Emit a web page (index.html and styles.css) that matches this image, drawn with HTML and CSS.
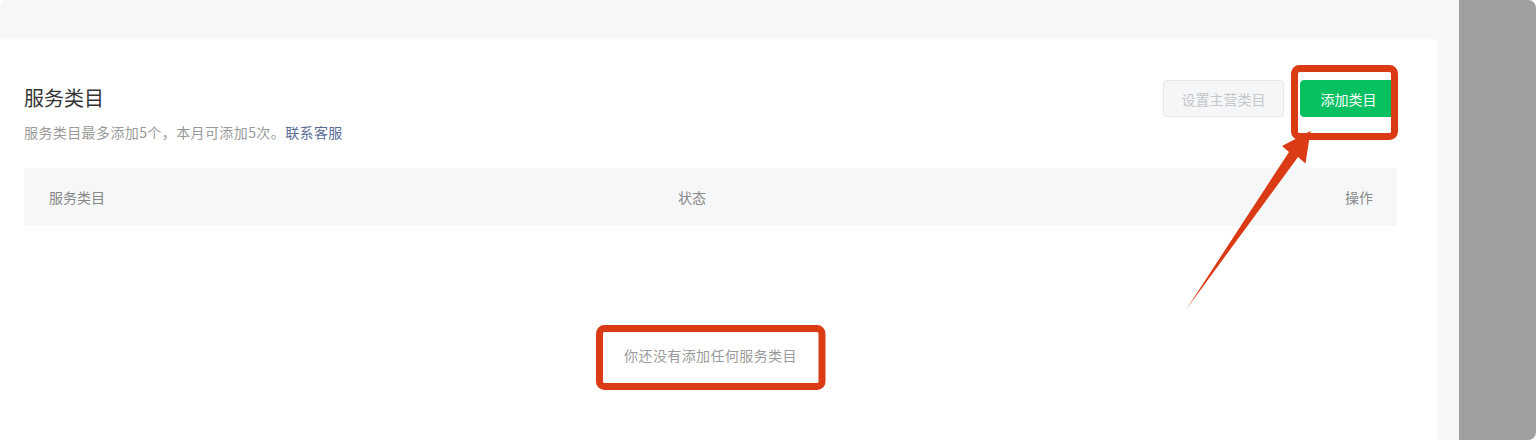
FILE: index.html
```html
<!DOCTYPE html>
<html lang="zh-CN">
<head>
<meta charset="utf-8">
<title>服务类目</title>
<link rel="stylesheet" href="styles.css">
</head>
<body>
<div class="screen">
  <div class="main">
    <div class="card">
      <div class="head">
        <div class="head-text">
          <h2 class="title">服务类目</h2>
          <p class="desc">服务类目最多添加5个，本月可添加5次。<a class="link" href="#">联系客服</a></p>
        </div>
        <div class="actions">
          <button class="btn btn-disabled" disabled>设置主营类目</button>
          <button class="btn btn-primary">添加类目</button>
        </div>
      </div>
      <div class="table">
        <div class="thead">
          <div class="th">服务类目</div>
          <div class="th">状态</div>
          <div class="th th-right">操作</div>
        </div>
        <div class="empty">你还没有添加任何服务类目</div>
      </div>
    </div>
  </div>
  <div class="side"></div>
  <svg class="annot" width="1536" height="440" viewBox="0 0 1536 440" aria-hidden="true">
    <rect x="1294.5" y="68.5" width="100" height="68" rx="5" ry="5" fill="none" stroke="#da3b14" stroke-width="7"/>
    <rect x="599.5" y="328.5" width="222.5" height="58" rx="5" ry="5" fill="none" stroke="#da3b14" stroke-width="7"/>
    <polygon points="1186.5,309 1289,152 1282,146 1310.5,131 1305.5,163.5 1298,157" fill="#da3b14"/>
  </svg>
</div>
</body>
</html>
```

FILE: styles.css
```css
* { box-sizing: border-box; }

html, body {
  margin: 0;
  padding: 0;
  background: #ffffff;
}

body {
  font-family: "Noto Sans CJK SC", "Noto Sans", "Liberation Sans", sans-serif;
  font-size: 14px;
  color: #353535;
}

.screen {
  position: relative;
  display: flex;
  width: 1536px;
  height: 440px;
  border-radius: 8px;
  overflow: hidden;
}

.main {
  flex: 1;
  background: #f6f7f9;
  padding: 39px 21px 0 0;
  display: flex;
  flex-direction: column;
}

.card {
  flex: 1;
  background: #ffffff;
  border-radius: 0 4px 0 0;
  padding: 41px 41px 0 24px;
}

.side {
  width: 77px;
  background: #a0a0a0;
}

.head {
  display: flex;
  justify-content: space-between;
  align-items: flex-start;
}

.head-text {
  padding-top: 4px;
}

.title {
  margin: 0;
  font-size: 20px;
  font-weight: 400;
  line-height: 28px;
  color: #353535;
}

.desc {
  margin: 9px 0 0;
  font-size: 14px;
  line-height: 22px;
  color: #9a9a9a;
  letter-spacing: 0.4px;
}

.link {
  color: #576b95;
  text-decoration: none;
}

.actions {
  display: flex;
  gap: 16px;
}

.btn {
  height: 37px;
  border-radius: 4px;
  font-family: inherit;
  font-size: 14px;
  line-height: 20px;
  padding: 0;
  cursor: pointer;
}

.btn-disabled {
  width: 121px;
  background: #f5f6f7;
  border: 1px solid #e5e6e8;
  color: #c4c6c9;
  cursor: default;
}

.btn-primary {
  width: 97px;
  background: #07c160;
  border: 1px solid #07c160;
  color: #ffffff;
}

.table {
  margin-top: 25px;
}

.thead {
  display: grid;
  grid-template-columns: 629px 1fr auto;
  align-items: center;
  height: 58px;
  padding: 0 24px 0 25px;
  background: #f6f7f9;
  color: #888888;
  font-size: 14px;
}

.th-right {
  text-align: right;
}

.empty {
  padding-top: 118px;
  text-align: center;
  line-height: 22px;
  color: #9a9a9a;
  font-size: 14px;
  letter-spacing: 0.4px;
}

.annot {
  position: absolute;
  left: 0;
  top: 0;
  pointer-events: none;
}
```
